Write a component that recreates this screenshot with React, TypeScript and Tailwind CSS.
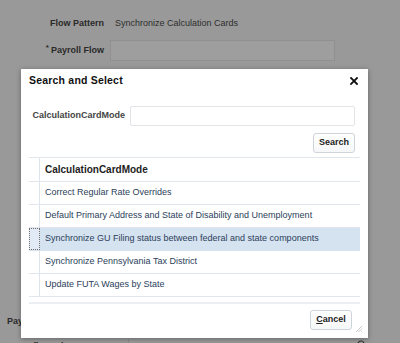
import React from 'react'

const rows = [
  'Correct Regular Rate Overrides',
  'Default Primary Address and State of Disability and Unemployment',
  'Synchronize GU Filing status between federal and state components',
  'Synchronize Pennsylvania Tax District',
  'Update FUTA Wages by State',
]

const selected = 2

function CloseIcon() {
  return (
    <svg width="8" height="8" viewBox="0 0 8 8" className="block">
      <path d="M1 1 L7 7 M7 1 L1 7" stroke="#111" strokeWidth="1.8" strokeLinecap="square" />
    </svg>
  )
}

function SearchDialog() {
  return (
    <div className="absolute left-[21px] top-[69px] w-[347px] h-[269px] bg-white flex flex-col shadow-[0_1px_5px_rgba(0,0,0,0.35)]">
      <div className="h-[24px] flex items-center justify-between pl-[8px] pr-[10px]">
        <span className="text-[10.5px] font-bold text-[#111] tracking-[0.2px]">Search and Select</span>
        <CloseIcon />
      </div>

      <div className="mt-[13px] flex items-center justify-end gap-[5px] pr-[13px]">
        <span className="text-[9px] font-bold text-[#444]">CalculationCardMode</span>
        <div className="w-[225px] h-[20px] border border-[#e2e5e8] rounded-[2px] bg-white" />
      </div>

      <div className="mt-[7px] flex justify-end pr-[13px]">
        <button className="w-[42px] h-[20px] border border-[#cfd4d9] rounded-[3px] bg-gradient-to-b from-white to-[#f6f7f8] text-[9px] font-bold text-[#222]">
          Search
        </button>
      </div>

      <div className="mt-[4px] mx-[8px] border-t border-[#e1e6ec]">
        <div className="flex h-[24px] border-b border-[#e1e6ec]">
          <div className="w-[11px] border-r border-[#dfe4ea]" />
          <div className="flex-1 flex items-center pl-[5px] text-[10px] font-bold text-[#222]">
            CalculationCardMode
          </div>
        </div>
        {rows.map((row, i) => (
          <div
            key={row}
            className={`flex h-[23px] border-b ${i === selected ? 'border-[#d5e2f0]' : 'border-[#e1e6ec]'}`}
          >
            {i === selected ? (
              <div className="w-[11px] border border-dotted border-[#6f6f6f] bg-[#e2ebf5]" />
            ) : (
              <div className="w-[11px] border-r border-[#dfe4ea]" />
            )}
            <div
              className={`flex-1 flex items-center pl-[5px] text-[9px] text-[#2b3e5a] whitespace-nowrap ${
                i === selected ? 'bg-[#d5e2f0]' : ''
              }`}
            >
              {row}
            </div>
          </div>
        ))}
        <div className="mt-[5px] border-t-2 border-[#eceff2]" />
      </div>

      <div className="mt-[6px] flex justify-end pr-[16px]">
        <button className="w-[42px] h-[20px] border border-[#cfd4d9] rounded-[3px] bg-gradient-to-b from-white to-[#f6f7f8] text-[9px] font-bold text-[#222]">
          <span className="underline">C</span>ancel
        </button>
      </div>

      <svg width="8" height="8" viewBox="0 0 8 8" className="absolute right-[5px] bottom-[5px]">
        <path d="M7 1 L1 7 M7 3.5 L3.5 7 M7 6 L6 7" stroke="#c8c8c8" strokeWidth="1" />
      </svg>
    </div>
  )
}

export default function App() {
  return (
    <div
      className="relative w-[400px] h-[343px] overflow-hidden bg-[#999999]"
      style={{ fontFamily: '"Liberation Sans", Arial, sans-serif' }}
    >
      <div className="pt-[14px]">
        <div className="flex items-center h-[20px]">
          <div className="w-[104px] text-right text-[9px] font-bold text-[#2a2a2a]">Flow Pattern</div>
          <div className="ml-[11px] text-[9px] text-[#2e2e2e]">Synchronize Calculation Cards</div>
        </div>
        <div className="mt-[6px] flex items-center h-[21px]">
          <div className="w-[104px] text-right text-[9px] font-bold text-[#2a2a2a]">
            <span className="relative -top-[3px] mr-[2px] text-[8px]">*</span>Payroll Flow
          </div>
          <div className="ml-[6px] w-[225px] h-[21px] bg-[#9e9e9e] border border-[#909090]" />
        </div>

        <div className="mt-[253px] flex items-center h-[16px] pl-[7px]">
          <div className="text-[9px] font-bold text-[#2a2a2a] whitespace-nowrap">Payroll Relationship Group</div>
        </div>

        <div className="mt-[9px] flex items-start h-[20px]">
          <div className="w-[104px] shrink-0 flex justify-end pt-[1px]">
            <span className="text-[9px] font-bold text-[#2a2a2a] whitespace-nowrap">Process Configuration Group</span>
          </div>
          <div className="ml-[24px] w-[225px] h-[20px] border-l border-[#8c8c8c]" />
          <svg width="9" height="9" viewBox="0 0 9 9" className="ml-[4px] mt-[1px]">
            <circle cx="4" cy="4" r="3" fill="none" stroke="#333" strokeWidth="1.2" />
          </svg>
        </div>
      </div>

      <SearchDialog />
    </div>
  )
}
